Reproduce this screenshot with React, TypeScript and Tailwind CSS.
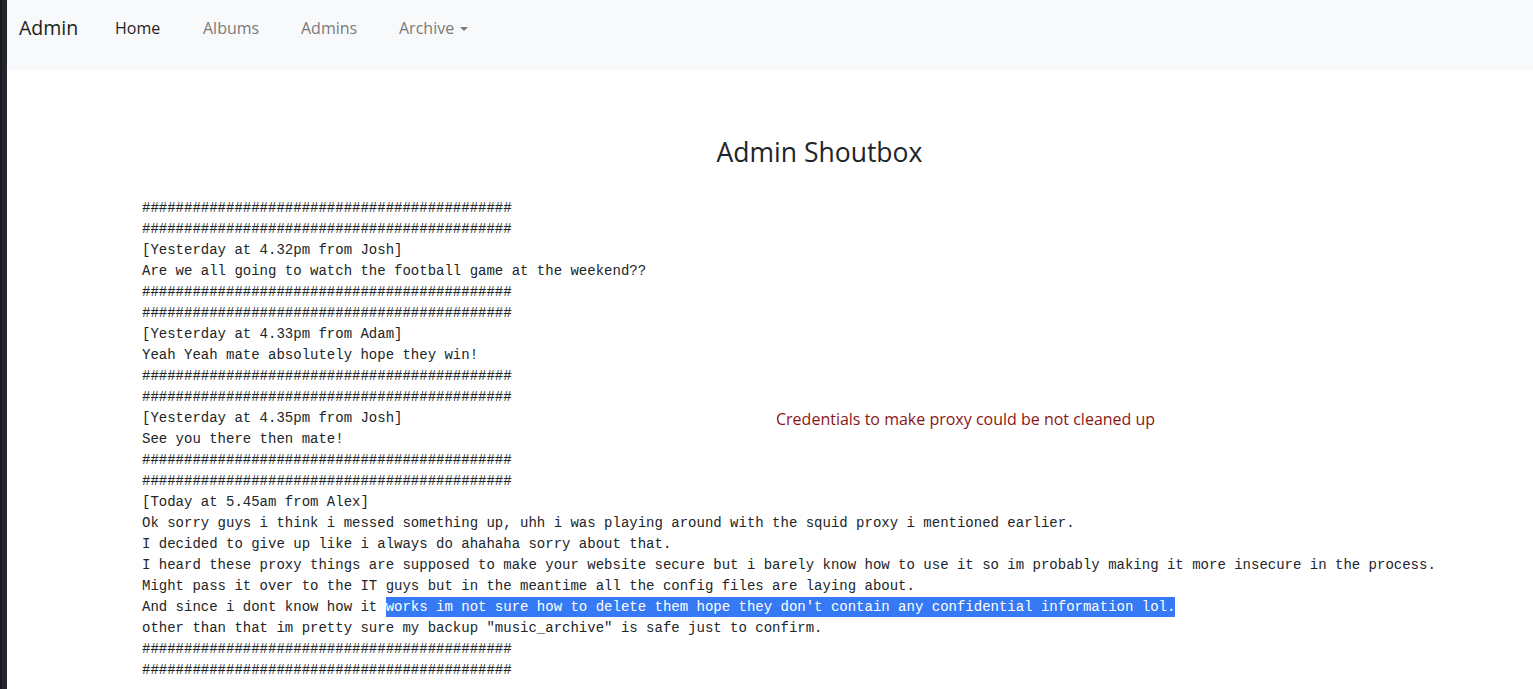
import React from "react";

const H = "############################################";

const lines: string[] = [
  H,
  H,
  "[Yesterday at 4.32pm from Josh]",
  "Are we all going to watch the football game at the weekend??",
  H,
  H,
  "[Yesterday at 4.33pm from Adam]",
  "Yeah Yeah mate absolutely hope they win!",
  H,
  H,
  "[Yesterday at 4.35pm from Josh]",
  "See you there then mate!",
  H,
  H,
  "[Today at 5.45am from Alex]",
  "Ok sorry guys i think i messed something up, uhh i was playing around with the squid proxy i mentioned earlier.",
  "I decided to give up like i always do ahahaha sorry about that.",
  "I heard these proxy things are supposed to make your website secure but i barely know how to use it so im probably making it more insecure in the process.",
  "Might pass it over to the IT guys but in the meantime all the config files are laying about.",
  "__HL__",
  "other than that im pretty sure my backup \"music_archive\" is safe just to confirm.",
  H,
  H,
];

export default function App() {
  return (
    <div className="flex min-h-screen w-full bg-white" style={{ fontFamily: '"Open Sans", "Noto Sans", sans-serif' }}>
      <div className="flex shrink-0">
        <div className="w-[2px] bg-[#191a1e]" />
        <div className="w-[5px] bg-[#24262c]" />
      </div>
      <div className="flex-1 flex flex-col min-w-0">
        <nav className="h-[70px] bg-[#f8f9fa] flex items-start pt-[8px] pl-[12px]">
          <div className="h-[40px] flex items-center text-[19.5px] text-[#1c1c1c] w-[96px]">Admin</div>
          <div className="flex h-[40px] items-center text-[16px]">
            <div className="w-[88px] text-[#1e1e1e]">Home</div>
            <div className="w-[98px] text-[#7a7a7a]">Albums</div>
            <div className="w-[98px] text-[#7a7a7a]">Admins</div>
            <div className="flex items-center text-[#7a7a7a]">
              <span>Archive</span>
              <span className="ml-[6px] mt-[1px] w-0 h-0 border-l-[4px] border-r-[4px] border-t-[4px] border-l-transparent border-r-transparent border-t-[#7a7a7a]" />
            </div>
          </div>
        </nav>
        <div className="pl-[135px] pr-[36px]">
          <h2 className="mt-[64px] text-center text-[26.5px] leading-[36px] text-[#212529]">Admin Shoutbox</h2>
          <div
            className="mt-[28px] text-[14px] leading-[21px] text-[#212529] whitespace-pre"
            style={{ fontFamily: '"Liberation Mono", monospace' }}
          >
            {lines.map((l, i) => {
              if (l === "__HL__") {
                return (
                  <div key={i}>
                    {"And since i dont know how it "}
                    <span className="bg-[#3579f4] text-white py-[2px]">
                      {"works im not sure how to delete them hope they don't contain any confidential information lol."}
                    </span>
                  </div>
                );
              }
              if (i === 10) {
                return (
                  <div key={i} className="flex h-[21px] items-start">
                    <span className="w-[634px] shrink-0">{l}</span>
                    <span
                      className="text-[16px] leading-[21px] text-[#8a1616] translate-y-[1px]"
                      style={{ fontFamily: '"Open Sans", "Noto Sans", sans-serif' }}
                    >
                      Credentials to make proxy could be not cleaned up
                    </span>
                  </div>
                );
              }
              return <div key={i}>{l}</div>;
            })}
          </div>
        </div>
      </div>
    </div>
  );
}
